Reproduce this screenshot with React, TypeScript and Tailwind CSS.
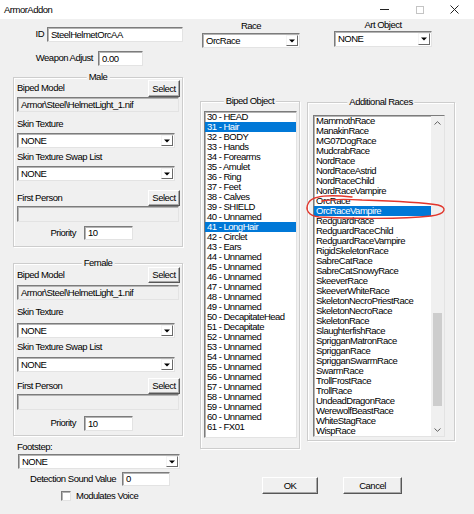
import React from 'react';

const BIPED = [
  '30 - HEAD', '31 - Hair', '32 - BODY', '33 - Hands', '34 - Forearms', '35 - Amulet', '36 - Ring',
  '37 - Feet', '38 - Calves', '39 - SHIELD', '40 - Unnamed', '41 - LongHair', '42 - Circlet', '43 - Ears',
  '44 - Unnamed', '45 - Unnamed', '46 - Unnamed', '47 - Unnamed', '48 - Unnamed', '49 - Unnamed',
  '50 - DecapitateHead', '51 - Decapitate', '52 - Unnamed', '53 - Unnamed', '54 - Unnamed', '55 - Unnamed',
  '56 - Unnamed', '57 - Unnamed', '58 - Unnamed', '59 - Unnamed', '60 - Unnamed', '61 - FX01',
];
const BIPED_SELECTED = ['31 - Hair', '41 - LongHair'];

const RACES = [
  'MammothRace', 'ManakinRace', 'MG07DogRace', 'MudcrabRace', 'NordRace', 'NordRaceAstrid', 'NordRaceChild',
  'NordRaceVampire', 'OrcRace', 'OrcRaceVampire', 'RedguardRace', 'RedguardRaceChild', 'RedguardRaceVampire',
  'RigidSkeletonRace', 'SabreCatRace', 'SabreCatSnowyRace', 'SkeeverRace', 'SkeeverWhiteRace',
  'SkeletonNecroPriestRace', 'SkeletonNecroRace', 'SkeletonRace', 'SlaughterfishRace', 'SprigganMatronRace',
  'SprigganRace', 'SprigganSwarmRace', 'SwarmRace', 'TrollFrostRace', 'TrollRace', 'UndeadDragonRace',
  'WerewolfBeastRace', 'WhiteStagRace', 'WispRace',
];

// classic sunken edit border
const sunken =
  'border border-t-[#7c7c7c] border-l-[#7c7c7c] border-r-[#e3e3e3] border-b-[#e3e3e3] shadow-[inset_1px_1px_0_#b4b4b4]';

const TextBox = ({ value = '', className = '', readOnly = false }: { value?: string; className?: string; readOnly?: boolean }) => (
  <div className={`flex items-center pl-[3px] ${readOnly ? 'bg-[#f0f0f0]' : 'bg-white'} ${sunken} ${className}`}>
    <span className="leading-none whitespace-nowrap">{value}</span>
  </div>
);

const Combo = ({ value, className = '' }: { value: string; className?: string }) => (
  <div className={`flex items-stretch bg-white ${sunken} ${className}`}>
    <span className="flex-1 flex items-center pl-[3px] leading-none">{value}</span>
    <span className="w-[12px] my-[1px] mr-[1px] flex items-center justify-center bg-white border border-t-[#f4f4f4] border-l-[#f4f4f4] border-r-[#6a6a6a] border-b-[#6a6a6a]">
      <svg width="6" height="4" viewBox="0 0 6 4">
        <path d="M0 0.5h6L3 3.5z" fill="#000" />
      </svg>
    </span>
  </div>
);

const Button = ({ children, className = '' }: { children: React.ReactNode; className?: string }) => (
  <button
    className={`flex items-center justify-center leading-none bg-[#f0f0f0] border border-t-white border-l-white border-r-[#575757] border-b-[#575757] shadow-[inset_-1px_-1px_0_#a8a8a8] ${className}`}
  >
    {children}
  </button>
);

const Group = ({ title, className = '', children }: { title: string; className?: string; children?: React.ReactNode }) => (
  <div className={`relative border border-[#cdcdcd] shadow-[inset_1px_1px_0_#fff,1px_1px_0_#fff] ${className}`}>
    <span className="absolute left-1/2 -translate-x-1/2 -top-[7px] bg-[#f0f0f0] px-[2px] leading-[12px] whitespace-nowrap">
      {title}
    </span>
    {children}
  </div>
);

const ModelGroup = ({ title, female }: { title: string; female: boolean }) => (
  <Group title={title} className={female ? 'mt-[16px] h-[173px]' : 'mt-[11px] h-[170px]'}>
    <div className="flex flex-col pl-[3px] pr-[2px]">
      <div className={`flex items-center justify-between ${female ? 'mt-[3px] h-[16px]' : 'mt-[2px] h-[17px]'}`}>
        <span>Biped Model</span>
        <Button className="w-[32px] h-full">Select</Button>
      </div>
      <TextBox
        readOnly
        value="Armor\Steel\HelmetLight_1.nif"
        className={`w-[162px] h-[15px] ${female ? 'mt-[2px]' : 'mt-0'}`}
      />
      <span className="mt-[6px] leading-[12px]">Skin Texture</span>
      <Combo value="NONE" className={`w-[158px] h-[15px] ${female ? 'mt-[5px]' : 'mt-[3px]'}`} />
      <span className="mt-[3px] leading-[12px]">Skin Texture Swap List</span>
      <Combo value="NONE" className={`w-[158px] h-[15px] ${female ? 'mt-[4px]' : 'mt-[3px]'}`} />
      <div className={`flex items-center justify-between h-[16px] ${female ? 'mt-[6px]' : 'mt-[9px]'}`}>
        <span>First Person</span>
        <Button className="w-[32px] h-full">Select</Button>
      </div>
      <TextBox readOnly className="w-[162px] h-[16px]" />
      <div className={`flex items-center ${female ? 'mt-[6px] h-[15px]' : 'mt-[4px] h-[14px]'}`}>
        <span className="w-[59px] text-right">Priority</span>
        <TextBox value="10" className="ml-[8px] w-[49px] h-full" />
      </div>
    </div>
  </Group>
);

const ListItem = ({ text, selected }: { text: string; selected: boolean }) => (
  <div
    className={`h-[10px] leading-[10px] pl-[2px] whitespace-nowrap ${selected ? 'bg-[#0078d7] text-white' : 'text-black'}`}
  >
    {text}
  </div>
);

const Chevron = ({ up }: { up: boolean }) => (
  <svg width="7" height="4" viewBox="0 0 7 4">
    <path d={up ? 'M0.5 3.5L3.5 0.7L6.5 3.5' : 'M0.5 0.5L3.5 3.3L6.5 0.5'} stroke="#606060" strokeWidth="1" fill="none" />
  </svg>
);

export default function App() {
  return (
    <div
      className="relative w-[474px] h-[514px] overflow-hidden bg-[#f0f0f0] text-[9.5px] tracking-[-0.5px] text-black"
      style={{ fontFamily: '"Liberation Sans", Arial, sans-serif' }}
    >
      {/* title bar */}
      <div className="h-[19px] bg-white flex items-center">
        <span className="pl-[4px] leading-none">ArmorAddon</span>
        <div className="ml-auto pr-[2px] flex h-full">
          <div className="w-[35px] flex items-center justify-center">
            <div className="w-[9px] h-px bg-[#222]" />
          </div>
          <div className="w-[35px] flex items-center justify-center">
            <div className="w-[8px] h-[8px] border border-[#c4c4c4]" />
          </div>
          <div className="w-[35px] flex items-center justify-center">
            <svg width="9" height="9" viewBox="0 0 9 9">
              <path d="M0.5 0.5L8.5 8.5M8.5 0.5L0.5 8.5" stroke="#222" strokeWidth="1" />
            </svg>
          </div>
        </div>
      </div>

      <div className="flex">
        {/* left column */}
        <div className="ml-[13px] w-[170px] flex flex-col">
          <div className="mt-[8px] flex items-center h-[15px]">
            <span className="w-[31px] text-right">ID</span>
            <TextBox value="SteelHelmetOrcAA" className="ml-[3px] w-[136px] h-full" />
          </div>
          <div className="mt-[9px] flex items-center h-[15px]">
            <span className="w-[80px] text-right">Weapon Adjust</span>
            <TextBox value="0.00" className="ml-[5px] w-[45px] h-full" />
          </div>

          <ModelGroup title="Male" female={false} />
          <ModelGroup title="Female" female />

          <span className="mt-[5px] pl-[4px] leading-[12px]">Footstep:</span>
          <Combo value="NONE" className="mt-[1px] ml-[5px] w-[162px] h-[15px]" />
          <div className="mt-[3px] flex items-center h-[14px]">
            <span className="w-[103px] text-right">Detection Sound Value</span>
            <TextBox value="0" className="ml-[6px] w-[48px] h-full" />
          </div>
          <div className="mt-[5px] flex items-center h-[10px] pl-[48px]">
            <div className={`w-[10px] h-[10px] bg-white ${sunken}`} />
            <span className="ml-[5px]">Modulates Voice</span>
          </div>
        </div>

        {/* right area */}
        <div className="ml-[17px] flex flex-col">
          <div className="flex">
            <div className="ml-[2px] w-[98px] flex flex-col items-center">
              <span className="mt-[1px] leading-[12px]">Race</span>
              <Combo value="OrcRace" className="mt-[1px] w-[98px] h-[15px]" />
            </div>
            <div className="ml-[34px] w-[98px] flex flex-col items-center">
              <span className="leading-[12px]">Art Object</span>
              <Combo value="NONE" className="w-[98px] h-[16px]" />
            </div>
          </div>

          <div className="mt-[53px] flex items-start">
            <Group title="Biped Object" className="w-[100px] h-[348px]">
              <div className={`ml-[3px] mt-[9px] w-[93px] h-[327px] bg-white overflow-hidden ${sunken}`}>
                {BIPED.map((b) => (
                  <ListItem key={b} text={b} selected={BIPED_SELECTED.includes(b)} />
                ))}
              </div>
            </Group>

            <Group title="Additional Races" className="ml-[7px] mt-[1px] w-[148px] h-[339px]">
              <div className={`ml-[5px] mt-[12px] w-[132px] h-[322px] bg-white flex ${sunken}`}>
                <div className="flex-1 overflow-hidden">
                  {RACES.map((r) => (
                    <ListItem key={r} text={r} selected={r === 'OrcRaceVampire'} />
                  ))}
                </div>
                <div className="w-[13px] flex flex-col bg-[#f0f0f0]">
                  <div className="h-[13px] flex items-center justify-center">
                    <Chevron up />
                  </div>
                  <div className="h-[184px]" />
                  <div className="mx-[2px] h-[93px] bg-[#cdcdcd]" />
                  <div className="flex-1" />
                  <div className="h-[13px] flex items-center justify-center">
                    <Chevron up={false} />
                  </div>
                </div>
              </div>
            </Group>
          </div>

          <div className="mt-[28px] flex">
            <Button className="ml-[62px] w-[56px] h-[17px]">OK</Button>
            <Button className="ml-[25px] w-[59px] h-[17px]">Cancel</Button>
          </div>
        </div>
      </div>

      {/* hand-drawn red mark around OrcRace entries */}
      <svg className="absolute left-0 top-0 pointer-events-none" width="474" height="514">
        <path
          d="M352 197 C334 195 314 195 309 202 C304 210 309 216 319 217 C352 219 402 219 431 216 C447 214 447 207 438 205 C420 202 392 201 362 200 C346 199 332 199 322 201"
          stroke="#e2362c"
          strokeWidth="1.4"
          fill="none"
          strokeLinecap="round"
        />
      </svg>
    </div>
  );
}
